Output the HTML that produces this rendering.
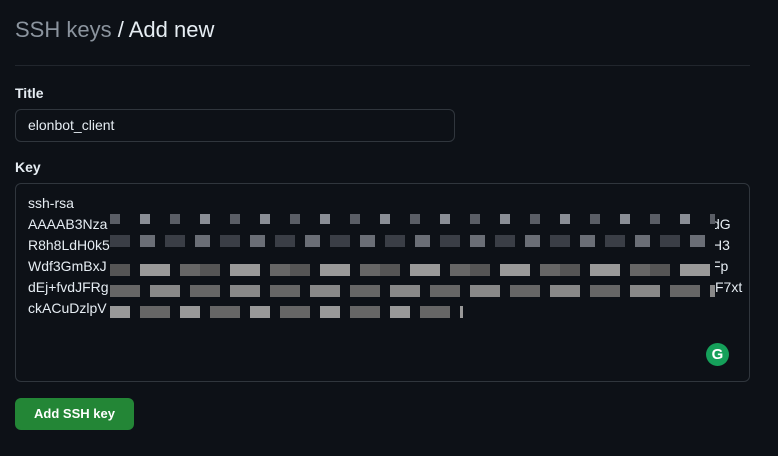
<!DOCTYPE html>
<html><head><style>
body{margin:0;background:#0d1117;width:778px;height:456px;overflow:hidden;font-family:"Liberation Sans",sans-serif;position:relative;color:#e6edf3}
.a{position:absolute}
h1{position:absolute;left:15px;top:17px;margin:0;font-size:22px;font-weight:400;color:#e6edf3}
h1 span{color:#8b949e}
.lbl{font-size:14px;font-weight:700}
.box{border:1px solid #30363d;border-radius:6px;background:#0d1117}
.ln{font-size:14px;color:#e6edf3;left:28px}
.px{position:absolute;height:12px}
</style></head><body>
<h1><span>SSH keys</span> / Add new</h1>
<div class="a" style="left:15px;top:65px;width:735px;height:1px;background:#21262d"></div>
<div class="a lbl" style="left:15px;top:85px">Title</div>
<div class="a box" style="left:15px;top:109px;width:438px;height:31px"></div>
<div class="a" style="left:28px;top:117px;font-size:14px">elonbot_client</div>
<div class="a lbl" style="left:15px;top:159px">Key</div>
<div class="a box" style="left:15px;top:183px;width:733px;height:197px"></div>
<div class="a ln" style="top:195px">ssh-rsa</div>
<div class="a ln" style="top:216px">AAAAB3Nza</div>
<div class="a ln" style="top:237px">R8h8LdH0k5</div>
<div class="a ln" style="top:258px">Wdf3GmBxJ</div>
<div class="a ln" style="top:279px">dEj+fvdJFRg</div>
<div class="a ln" style="top:300px">ckACuDzlpV</div>
<div class="a ln" style="top:216px;left:712px">dG</div>
<div class="a ln" style="top:237px;left:712px">H3</div>
<div class="a ln" style="top:258px;left:712px">Fp</div>
<div class="a ln" style="top:279px;left:715px">F7xt</div>
<div class="px" style="left:110px;top:212px;width:605px;height:52px;background:#0d1117"></div>
<div class="px" style="left:110px;top:214px;width:605px;height:10px;background:repeating-linear-gradient(90deg,#5a5e66 0 10px,#0d1117 10px 30px,#8a8e96 30px 40px,#0d1117 40px 60px)"></div>
<div class="px" style="left:110px;top:235px;width:605px;height:12px;background:repeating-linear-gradient(90deg,#3a3e46 0 20px,#0d1117 20px 30px,#6a6e76 30px 45px,#0d1117 45px 55px)"></div>
<div class="px" style="left:110px;top:264px;width:605px;background:repeating-linear-gradient(90deg,#555 0 20px,#0d1117 20px 30px,#999 30px 60px,#0d1117 60px 70px,#666 70px 90px)"></div>
<div class="px" style="left:110px;top:285px;width:605px;background:repeating-linear-gradient(90deg,#666 0 30px,#0d1117 30px 40px,#888 40px 70px,#0d1117 70px 80px)"></div>
<div class="px" style="left:110px;top:306px;width:353px;background:repeating-linear-gradient(90deg,#999 0 20px,#0d1117 20px 30px,#666 30px 60px,#0d1117 60px 70px)"></div>
<div class="a" style="left:706px;top:343px;width:23px;height:23px;border-radius:50%;background:#15a05a;color:#fff;font-size:15px;font-weight:700;text-align:center;line-height:23px">G</div>
<div class="a" style="left:15px;top:398px;width:119px;height:32px;border-radius:6px;background:#238636;color:#fff;font-size:13px;font-weight:700;text-align:center;line-height:32px">Add SSH key</div>
</body></html>
